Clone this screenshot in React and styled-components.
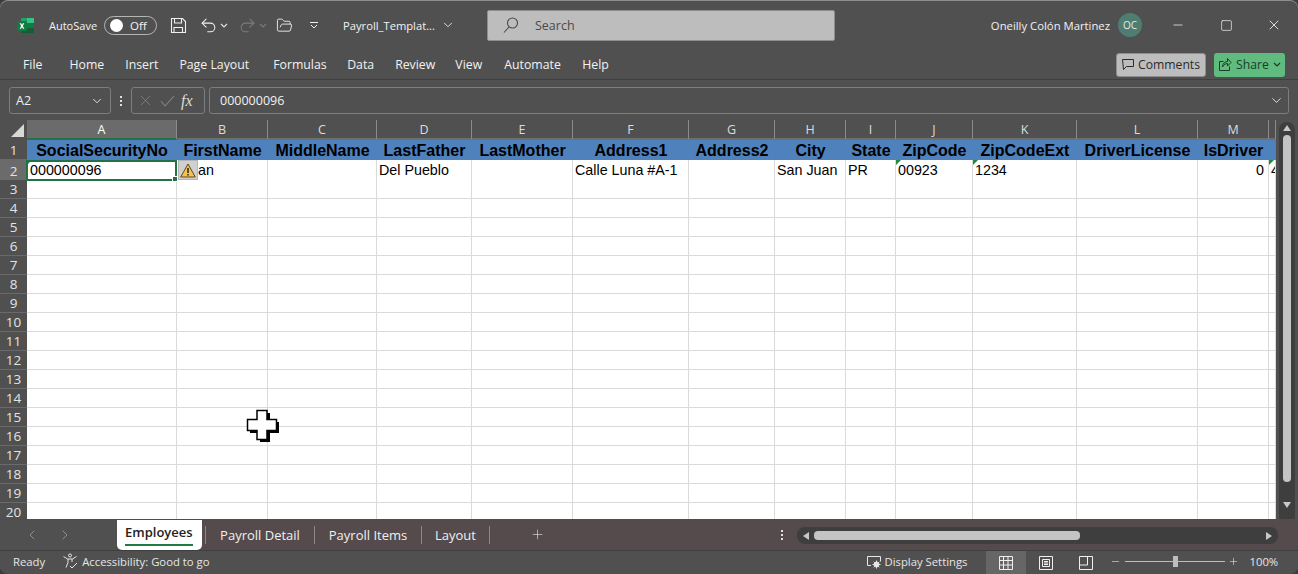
import React from "react";
import styled, { createGlobalStyle, css } from "styled-components";
import { ChevronDown, ChevronLeft, ChevronRight, FolderOpen, Minus, Plus, Redo2, Square, Undo2, X } from "lucide-react";

const uiFont = `"Open Sans", "Noto Sans", sans-serif`;
const gridColumns = "27px 150px 91px 109px 95px 101px 116px 86px 71px 50px 77px 104px 121px 71px 7px";

const GlobalStyle = createGlobalStyle`
  html, body {
    margin: 0;
    padding: 0;
    width: 1298px;
    height: 574px;
    overflow: hidden;
    background: #3c3c3c;
  }
`;

const Win = styled.div`
  position: relative;
  width: 1298px;
  height: 574px;
  box-sizing: border-box;
  display: flex;
  flex-direction: column;
  overflow: hidden;
  border-radius: 8px;
  background: #505050;
  color: #f2f2f2;
  font-family: ${uiFont};
  font-size: 12px;
  box-shadow: inset 0 1px 0 #8c8c8c;
`;

const TitleBar = styled.div`
  height: 50px;
  flex: none;
  display: flex;
  align-items: center;
`;

const QuickAccess = styled.div`
  width: 487px;
  flex: none;
  box-sizing: border-box;
  padding-left: 16px;
  display: flex;
  align-items: center;
`;

const AutoSave = styled.span`
  margin-left: 14px;
  font-size: 11px;
`;

const Toggle = styled.div`
  margin-left: 7px;
  width: 53px;
  height: 19px;
  box-sizing: border-box;
  border: 1px solid #b5b5b5;
  border-radius: 10px;
  display: flex;
  align-items: center;
  padding-left: 5px;
  font-size: 11.5px;
  gap: 7px;
  &::before {
    content: "";
    width: 13px;
    height: 13px;
    border-radius: 50%;
    background: #fff;
  }
`;

const QuickIcon = styled.span`
  display: flex;
  align-items: center;
  margin-left: ${(p) => p.$gap || 0}px;
  color: ${(p) => (p.$off ? "#7c7c7c" : "#f0f0f0")};
`;

const FileName = styled.span`
  margin-left: 24px;
  font-size: 11.2px;
`;

const SearchBox = styled.div`
  width: 348px;
  height: 31px;
  box-sizing: border-box;
  flex: none;
  display: flex;
  align-items: center;
  gap: 15px;
  padding-left: 14px;
  background: #bdbdbd;
  border: 1px solid #8e8e8e;
  border-radius: 2px;
  color: #4a4a4a;
  font-size: 12.5px;
`;

const Account = styled.div`
  margin-left: auto;
  display: flex;
  align-items: center;
  font-size: 11.3px;
`;

const Avatar = styled.span`
  margin: 0 12px 0 8px;
  width: 24px;
  height: 24px;
  border-radius: 50%;
  background: #4f7d72;
  color: #e8e8e8;
  font-size: 10px;
  display: flex;
  align-items: center;
  justify-content: center;
`;

const WinButton = styled.span`
  width: 48px;
  display: flex;
  justify-content: center;
  color: #f2f2f2;
`;

const RibbonTabs = styled.div`
  height: 30px;
  flex: none;
  box-sizing: border-box;
  display: flex;
  align-items: center;
  padding: 0 13px 0 23px;
  border-bottom: 1px solid #3f3f3f;
  font-size: 12.3px;
`;

const MenuItem = styled.span`
  margin-right: ${(p) => p.$gap}px;
`;

const ActionButton = styled.div`
  height: 24px;
  box-sizing: border-box;
  display: flex;
  align-items: center;
  justify-content: center;
  gap: 4px;
  border-radius: 3px;
  font-size: 12.2px;
  ${(p) =>
    p.$share
      ? css`
          width: 71px;
          margin-left: 8px;
          background: #5fbb7e;
          color: #1d3b28;
        `
      : css`
          width: 90px;
          margin-left: auto;
          background: #bdbdbd;
          border: 1px solid #8e8e8e;
          color: #2b2b2b;
        `}
`;

const FormulaBar = styled.div`
  height: 40px;
  flex: none;
  box-sizing: border-box;
  padding: 7px 9px 6px;
  display: flex;
  align-items: stretch;
`;

const FieldBox = styled.div`
  box-sizing: border-box;
  border: 1px solid #7d7d7d;
  border-radius: 3px;
  display: flex;
  align-items: center;
  font-size: 12.5px;
  color: #f0f0f0;
`;

const NameBox = styled(FieldBox)`
  width: 102px;
  padding: 0 6px;
  justify-content: space-between;
`;

const Dots = styled.span`
  width: 20px;
  flex: none;
  display: flex;
  flex-direction: column;
  align-items: center;
  justify-content: center;
  gap: 2px;
  i {
    width: 2px;
    height: 2px;
    background: #e0e0e0;
  }
`;

const FxBox = styled(FieldBox)`
  width: 74px;
  padding: 0 5px;
  gap: 6px;
  color: #858585;
`;

const FxLabel = styled.span`
  font-family: "Liberation Serif", serif;
  font-style: italic;
  font-size: 16px;
  color: #dcdcdc;
`;

const FormulaInput = styled(FieldBox)`
  flex: 1;
  margin-left: 4px;
  padding: 0 4px 0 10px;
  justify-content: space-between;
`;

const SheetArea = styled.div`
  height: 399px;
  flex: none;
  display: flex;
  overflow: hidden;
`;

const Sheet = styled.div`
  width: 1276px;
  flex: none;
  overflow: hidden;
  background: #fff;
`;

const Row = styled.div`
  display: grid;
  grid-template-columns: ${gridColumns};
  height: ${(p) => p.$h}px;
`;

const Corner = styled.div`
  position: relative;
  background: #505050;
  &::after {
    content: "";
    position: absolute;
    right: 3px;
    bottom: 3px;
    border-style: solid;
    border-width: 0 0 13px 13px;
    border-color: transparent transparent #d8d8d8 transparent;
  }
`;

const ColHead = styled.div`
  box-sizing: border-box;
  display: flex;
  align-items: center;
  justify-content: center;
  padding-top: 1px;
  font-size: 12.5px;
  color: ${(p) => (p.$active ? "#ffffff" : "#dcdcdc")};
  background: ${(p) => (p.$active ? "#6b6b6b" : "#505050")};
  border-right: 1px solid #8a8a8a;
  border-bottom: 2px solid ${(p) => (p.$active ? "#217346" : "#6e6e6e")};
  overflow: hidden;
`;

const RowHead = styled.div`
  box-sizing: border-box;
  display: flex;
  align-items: center;
  justify-content: center;
  font-size: 13.5px;
  color: #e4e4e4;
  background: ${(p) => (p.$active ? "#6b6b6b" : "#505050")};
  border-bottom: 1px solid #6a6a6a;
`;

const TitleCell = styled.div`
  box-sizing: border-box;
  padding-top: 1px;
  background: #4f81bd;
  color: #000;
  font: bold 16px "Liberation Sans", Arial, sans-serif;
  display: flex;
  align-items: center;
  justify-content: center;
  white-space: nowrap;
  overflow: hidden;
`;

const Cell = styled.div`
  position: relative;
  box-sizing: border-box;
  min-width: 0;
  padding: 0 ${(p) => (p.$right ? 4 : 2)}px 0 ${(p) => p.$indent || 2}px;
  background: #fff;
  color: #000;
  font: 14.3px "Liberation Sans", Arial, sans-serif;
  line-height: 21px;
  text-align: ${(p) => (p.$right ? "right" : "left")};
  white-space: nowrap;
  overflow: ${(p) => (p.$clip ? "hidden" : "visible")};
  border-right: 1px solid #dadada;
  border-bottom: 1px solid #dadada;
  ${(p) =>
    p.$flag &&
    css`
      &::before {
        content: "";
        position: absolute;
        left: 0;
        top: 0;
        border-style: solid;
        border-width: 5px 5px 0 0;
        border-color: #1e8b3e transparent transparent transparent;
      }
    `}
`;

const Selection = styled.div`
  position: absolute;
  left: -1px;
  top: 0;
  width: 151px;
  height: 21px;
  box-sizing: border-box;
  border: 2px solid #217346;
  z-index: 3;
  &::after {
    content: "";
    position: absolute;
    right: -3px;
    bottom: -3px;
    width: 6px;
    height: 6px;
    background: #217346;
    border: 1px solid #fff;
    box-sizing: border-box;
  }
`;

const WarningTag = styled.div`
  position: absolute;
  left: 1px;
  top: 0;
  width: 20px;
  height: 20px;
  box-sizing: border-box;
  background: #d0d0d0;
  border: 1px solid #b5b5b5;
  display: flex;
  align-items: center;
  justify-content: center;
  z-index: 2;
`;

const VScroll = styled.div`
  flex: 1;
  display: flex;
  justify-content: center;
`;

const VTrack = styled.div`
  width: 16px;
  height: 402px;
  margin-top: 2px;
  box-sizing: border-box;
  padding-top: 3px;
  display: flex;
  flex-direction: column;
  align-items: center;
  background: #3e3e3e;
  border-radius: 8px;
`;

const VThumb = styled.div`
  width: 8px;
  height: 347px;
  margin-top: 4px;
  margin-bottom: 20px;
  border-radius: 4px;
  background: #c4c4c4;
`;

const Arrow = styled.span`
  width: 0;
  height: 0;
  border-style: solid;
  ${(p) =>
    ({
      up: "border-width: 0 4.5px 6px; border-color: transparent transparent #c8c8c8;",
      down: "border-width: 6px 4.5px 0; border-color: #c8c8c8 transparent transparent;",
      left: "border-width: 4.5px 6px 4.5px 0; border-color: transparent #c8c8c8 transparent transparent;",
      right: "border-width: 4.5px 0 4.5px 6px; border-color: transparent transparent transparent #c8c8c8;",
    })[p.$dir]}
`;

const TabBar = styled.div`
  height: 32px;
  flex: none;
  box-sizing: border-box;
  display: flex;
  align-items: flex-start;
  padding-top: 1px;
  background: #554a4c;
  border-bottom: 1px solid #3f3f3f;
`;

const NavArrows = styled.div`
  width: 117px;
  height: 30px;
  flex: none;
  box-sizing: border-box;
  padding-left: 24px;
  display: flex;
  align-items: center;
  gap: 17px;
  color: #a0a0a0;
  background: #505050;
`;

const ActiveTab = styled.div`
  position: relative;
  width: 85px;
  height: 30px;
  flex: none;
  box-sizing: border-box;
  padding: 3px 0 0 8px;
  background: #fff;
  border-radius: 0 0 5px 5px;
  color: #222;
  font-weight: 600;
  font-size: 13px;
  &::after {
    content: "";
    position: absolute;
    left: 8px;
    bottom: 4px;
    width: 68px;
    height: 2px;
    background: #1e7b45;
  }
`;

const SheetTab = styled.div`
  height: 18px;
  margin-top: 6px;
  display: flex;
  align-items: center;
  justify-content: center;
  flex: none;
  width: ${(p) => p.$w}px;
  box-sizing: border-box;
  font-size: 13px;
  color: #f0f0f0;
  border-right: 1px solid #8e8587;
`;

const TabGap = styled.span`
  width: 3px;
  height: 18px;
  margin-top: 6px;
  flex: none;
  border-right: 1px solid #8e8587;
`;

const AddSheet = styled.span`
  margin: 7px 0 0 40px;
  color: #d8d8d8;
  display: flex;
`;

const TabSplit = styled(Dots)`
  width: 16px;
  height: 18px;
  margin: 6px 0 0 229px;
`;

const HScroll = styled.div`
  width: 481px;
  height: 17px;
  margin: 7px 0 0 7px;
  flex: none;
  box-sizing: border-box;
  padding: 0 6px;
  display: flex;
  align-items: center;
  background: #3e3e3e;
  border-radius: 8px;
`;

const HThumb = styled.div`
  width: 266px;
  height: 9px;
  margin: 0 auto 0 5px;
  border-radius: 4px;
  background: #c4c4c4;
`;

const StatusBar = styled.div`
  height: 23px;
  flex: none;
  box-sizing: border-box;
  display: flex;
  align-items: center;
  padding: 0 0 2px 13px;
  font-size: 11.3px;
  color: #e6e6e6;
`;

const StatusItem = styled.span`
  display: flex;
  align-items: center;
  gap: 3px;
  margin-left: ${(p) => p.$gap || 0}px;
`;

const ViewGroup = styled.div`
  margin: 0 0 -2px 19px;
  display: flex;
`;

const ViewButton = styled.span`
  width: 40px;
  height: 23px;
  display: flex;
  align-items: center;
  justify-content: center;
  background: ${(p) => (p.$active ? "#666666" : "transparent")};
`;

const ZoomGroup = styled.div`
  margin-left: 4px;
  display: flex;
  align-items: center;
  color: #e6e6e6;
`;

const Slider = styled.div`
  position: relative;
  width: 100px;
  height: 1px;
  margin: 0 3px 0 4px;
  background: #bdbdbd;
  &::after {
    content: "";
    position: absolute;
    left: 48px;
    top: -5px;
    width: 5px;
    height: 11px;
    background: #bdbdbd;
  }
`;

const ZoomValue = styled.span`
  margin-left: 10px;
`;

const Cursor = styled.svg`
  position: absolute;
  left: 246px;
  top: 409px;
`;

const headers = ["SocialSecurityNo", "FirstName", "MiddleName", "LastFather", "LastMother", "Address1", "Address2", "City", "State", "ZipCode", "ZipCodeExt", "DriverLicense", "IsDriver"];
const letters = "ABCDEFGHIJKLMN".split("");
const emptyRows = Array.from({ length: 18 }, (_, i) => i + 3);

const ExcelLogo = () => (
  <svg width="19" height="19" viewBox="0 0 19 19">
    <rect x="5" y="2" width="13" height="15" rx="1" fill="#21a366" />
    <rect x="11" y="2" width="7" height="5" fill="#33c481" />
    <rect x="11" y="7" width="7" height="5" fill="#107c41" />
    <rect x="5" y="12" width="13" height="5" fill="#185c37" />
    <rect x="1" y="5" width="10" height="10" rx="1" fill="#107c41" />
    <path d="M3.600 7.300h1.500L6 9l.9-1.700h1.400L6.800 10l1.600 2.700H7L6 10.900l-1 1.800H3.600L5.200 10z" fill="#fff" />
  </svg>
);

const SaveIcon = () => (
  <svg width="17" height="17" viewBox="0 0 17 17" fill="none" stroke="#f0f0f0" strokeWidth="1.1">
    <path d="M1.500 1.500h11l3 3v11h-14z" />
    <path d="M4.500 1.500v4.500h7v-4.500M4 15.500v-5h8.500v5" />
  </svg>
);

const TinyChevron = ({ color = "#e0e0e0" }) => (
  <svg width="8" height="5" viewBox="0 0 8 5" fill="none" stroke={color} strokeWidth="1.2">
    <path d="M1 1l3 3 3-3" />
  </svg>
);

const CustomizeIcon = () => (
  <svg width="10" height="9" viewBox="0 0 10 9" fill="none" stroke="#f0f0f0">
    <path d="M1 1.500h8M2 4l3 3 3-3" />
  </svg>
);

const SearchIcon = () => (
  <svg width="18" height="18" viewBox="0 0 18 18" fill="none" stroke="#4a4a4a" strokeWidth="1.1">
    <circle cx="10.500" cy="7" r="5" />
    <path d="M7 11l-5 5.500" />
  </svg>
);

const CommentIcon = () => (
  <svg width="12" height="13" viewBox="0 0 12 13" fill="none" stroke="#2b2b2b">
    <path d="M.5 1.500h11v7h-7l-3 3z" />
  </svg>
);

const ShareIcon = () => (
  <svg width="14" height="15" viewBox="0 0 14 15" fill="none" stroke="#1d3b28">
    <path d="M5.500 4.500h-4v9h10v-4M4.500 10c0-3.500 2.500-5.500 5-5.500v-3l3.500 4-3.500 3.500v-2.500c-2 0-3.500 1-5 3.500z" />
  </svg>
);

const WarningIcon = () => (
  <svg width="16" height="15" viewBox="0 0 16 15">
    <path d="M8 1L15.300 14H.7z" fill="#f3c24f" stroke="#5b4a24" />
    <path d="M8 5v5M8 11v1.500" stroke="#222" strokeWidth="1.500" />
  </svg>
);

const AccessIcon = () => (
  <svg width="17" height="17" viewBox="0 0 17 17" fill="none" stroke="#e6e6e6">
    <circle cx="8" cy="2.500" r="1.500" />
    <path d="M1.500 3.500l4 2.500h5l4-2.500M6 6v3.500l-2 5M10 6v3M8 13l2 2 5-5" />
  </svg>
);

const DisplayIcon = () => (
  <svg width="15" height="14" viewBox="0 0 15 14" fill="none" stroke="#e6e6e6">
    <path d="M4 10.500H.5v-9h13v5" />
    <circle cx="9.500" cy="9.500" r="2.500" fill="#e6e6e6" />
    <path d="M9.500 5.500v8M5.500 9.500h8M6.700 6.700l5.600 5.600M12.300 6.700l-5.600 5.600" />
  </svg>
);

const NormalViewIcon = () => (
  <svg width="14" height="14" viewBox="0 0 14 14" fill="none" stroke="#f0f0f0">
    <path d="M.5.500h13v13H.5zM.5 4.500h13M.5 9h13M4.500.500v13M9 .500v13" />
  </svg>
);

const PageViewIcon = () => (
  <svg width="14" height="14" viewBox="0 0 14 14" fill="none" stroke="#f0f0f0">
    <path d="M.5.500h13v13H.5zM3.500 3.500h7v7h-7zM5 5.500h4M5 7h4M5 8.500h4" />
  </svg>
);

const BreakViewIcon = () => (
  <svg width="14" height="14" viewBox="0 0 14 14" fill="none" stroke="#f0f0f0">
    <path d="M.5.500h13v13H.5zM.5 9h8V.5" />
  </svg>
);

const App = () => (
  <>
    <GlobalStyle />
    <Win>
      <TitleBar>
        <QuickAccess>
          <ExcelLogo />
          <AutoSave>AutoSave</AutoSave>
          <Toggle>Off</Toggle>
          <QuickIcon $gap={13}>
            <SaveIcon />
          </QuickIcon>
          <QuickIcon $gap={12}>
            <Undo2 size={19} strokeWidth={1.3} />
          </QuickIcon>
          <QuickIcon $gap={2}>
            <TinyChevron />
          </QuickIcon>
          <QuickIcon $gap={10} $off>
            <Redo2 size={19} strokeWidth={1.3} />
          </QuickIcon>
          <QuickIcon $gap={2}>
            <TinyChevron color="#7c7c7c" />
          </QuickIcon>
          <QuickIcon $gap={9}>
            <FolderOpen size={17} strokeWidth={1.3} />
          </QuickIcon>
          <QuickIcon $gap={16}>
            <CustomizeIcon />
          </QuickIcon>
          <FileName>Payroll_Templat...</FileName>
          <QuickIcon $gap={6}>
            <ChevronDown size={14} strokeWidth={1.5} />
          </QuickIcon>
        </QuickAccess>
        <SearchBox>
          <SearchIcon />
          Search
        </SearchBox>
        <Account>
          Oneilly Colón Martinez
          <Avatar>OC</Avatar>
          <WinButton>
            <Minus size={14} strokeWidth={1.3} />
          </WinButton>
          <WinButton>
            <Square size={13} strokeWidth={1.3} />
          </WinButton>
          <WinButton>
            <X size={16} strokeWidth={1.3} />
          </WinButton>
        </Account>
      </TitleBar>

      <RibbonTabs>
        <MenuItem $gap={27}>File</MenuItem>
        <MenuItem $gap={21}>Home</MenuItem>
        <MenuItem $gap={21}>Insert</MenuItem>
        <MenuItem $gap={24}>Page Layout</MenuItem>
        <MenuItem $gap={20.5}>Formulas</MenuItem>
        <MenuItem $gap={21}>Data</MenuItem>
        <MenuItem $gap={20}>Review</MenuItem>
        <MenuItem $gap={22}>View</MenuItem>
        <MenuItem $gap={21.5}>Automate</MenuItem>
        <MenuItem $gap={0}>Help</MenuItem>
        <ActionButton>
          <CommentIcon />
          Comments
        </ActionButton>
        <ActionButton $share>
          <ShareIcon />
          Share
          <TinyChevron color="#1d3b28" />
        </ActionButton>
      </RibbonTabs>

      <FormulaBar>
        <NameBox>
          A2
          <ChevronDown size={14} strokeWidth={1.5} />
        </NameBox>
        <Dots>
          <i />
          <i />
          <i />
        </Dots>
        <FxBox>
          <X size={17} strokeWidth={1.1} />
          <svg width="15" height="12" viewBox="0 0 15 12" fill="none" stroke="#858585" strokeWidth="1.100">
            <path d="M1 6l4 5 9-10" />
          </svg>
          <FxLabel>fx</FxLabel>
        </FxBox>
        <FormulaInput>
          000000096
          <ChevronDown size={15} strokeWidth={1.4} />
        </FormulaInput>
      </FormulaBar>

      <SheetArea>
        <Sheet>
          <Row $h={20}>
            <Corner />
            {letters.map((l) => (
              <ColHead key={l} $active={l === "A"}>
                {l === "N" ? "" : l}
              </ColHead>
            ))}
          </Row>
          <Row $h={20}>
            <RowHead>1</RowHead>
            {headers.map((h) => (
              <TitleCell key={h}>{h}</TitleCell>
            ))}
            <TitleCell />
          </Row>
          <Row $h={20}>
            <RowHead $active>2</RowHead>
            <Cell $flag $indent={3}>
              000000096
              <Selection />
            </Cell>
            <Cell $indent={21} $clip>
              an
              <WarningTag>
                <WarningIcon />
              </WarningTag>
            </Cell>
            <Cell />
            <Cell>Del Pueblo</Cell>
            <Cell />
            <Cell>Calle Luna #A-1</Cell>
            <Cell />
            <Cell>San Juan</Cell>
            <Cell>PR</Cell>
            <Cell $flag>00923</Cell>
            <Cell $flag>1234</Cell>
            <Cell />
            <Cell $right>0</Cell>
            <Cell $flag $clip>
              4
            </Cell>
          </Row>
          {emptyRows.map((n) => (
            <Row key={n} $h={19}>
              <RowHead>{n}</RowHead>
              {letters.map((l) => (
                <Cell key={l} />
              ))}
            </Row>
          ))}
        </Sheet>
        <VScroll>
          <VTrack>
            <Arrow $dir="up" />
            <VThumb />
            <Arrow $dir="down" />
          </VTrack>
        </VScroll>
      </SheetArea>

      <TabBar>
        <NavArrows>
          <ChevronLeft size={16} strokeWidth={1.2} />
          <ChevronRight size={16} strokeWidth={1.2} />
        </NavArrows>
        <ActiveTab>Employees</ActiveTab>
        <TabGap />
        <SheetTab $w={109}>Payroll Detail</SheetTab>
        <SheetTab $w={107}>Payroll Items</SheetTab>
        <SheetTab $w={68}>Layout</SheetTab>
        <AddSheet>
          <Plus size={15} strokeWidth={1.1} />
        </AddSheet>
        <TabSplit>
          <i />
          <i />
          <i />
        </TabSplit>
        <HScroll>
          <Arrow $dir="left" />
          <HThumb />
          <Arrow $dir="right" />
        </HScroll>
      </TabBar>

      <StatusBar>
        Ready
        <StatusItem $gap={17}>
          <AccessIcon />
          Accessibility: Good to go
        </StatusItem>
        <StatusItem $gap={657}>
          <DisplayIcon />
          Display Settings
        </StatusItem>
        <ViewGroup>
          <ViewButton $active>
            <NormalViewIcon />
          </ViewButton>
          <ViewButton>
            <PageViewIcon />
          </ViewButton>
          <ViewButton>
            <BreakViewIcon />
          </ViewButton>
        </ViewGroup>
        <ZoomGroup>
          <Minus size={11} strokeWidth={1.3} />
          <Slider />
          <Plus size={11} strokeWidth={1.3} />
          <ZoomValue>100%</ZoomValue>
        </ZoomGroup>
      </StatusBar>

      <Cursor width="34" height="34" viewBox="0 0 34 34">
        <path d="M14 4h10v9h9v11h-9v9H14v-9H4V13h10z" fill="#000" />
        <path d="M11 1.500h10v9h9.500v11H21v9H11v-9H1.500v-11H11z" fill="#fff" stroke="#000" strokeWidth="1.500" />
      </Cursor>
    </Win>
  </>
);

export default App;
